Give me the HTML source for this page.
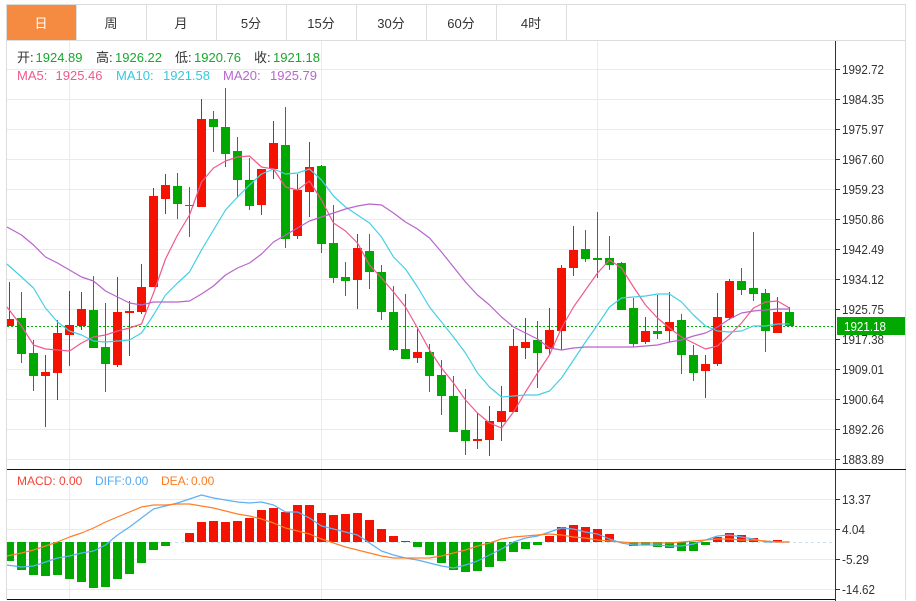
<!DOCTYPE html>
<html lang="zh">
<head>
<meta charset="utf-8">
<title>K线图</title>
<style>
html,body{margin:0;padding:0;background:#fff;width:916px;height:601px;overflow:hidden}
svg{display:block;position:absolute;left:0;top:0}
text{font-family:"Liberation Sans","Noto Sans CJK SC",sans-serif}
.tab{font-size:13px;fill:#333;text-anchor:middle}
.ax{font-size:13px;fill:#333}
.h{font-size:13px;fill:#333}
.v{font-size:13px;fill:#16a82c}
.ma{font-size:13px}
.m{font-size:12px}
</style>
</head>
<body>
<svg width="916" height="601" viewBox="0 0 916 601" xmlns="http://www.w3.org/2000/svg">
<!-- grid -->
<path shape-rendering="crispEdges" stroke="#e4ebf1" stroke-width="1" fill="none" d="M7 69.5H835M7 99.5H835M7 129.5H835M7 159.5H835M7 189.5H835M7 219.5H835M7 249.5H835M7 279.5H835M7 309.5H835M7 339.5H835M7 369.5H835M7 399.5H835M7 429.5H835M7 459.5H835M7 499.5H835M7 529.5H835M7 559.5H835M7 589.5H835M69.5 41V600M321.5 41V600M597.5 41V600"/>
<!-- frame -->
<path shape-rendering="crispEdges" stroke="#dcdcdc" fill="none" d="M6 4.5H906M6.5 4V600M905.5 4V600M6 40.5H906M76.5 5V40M146.5 5V40M216.5 5V40M286.5 5V40M356.5 5V40M426.5 5V40M496.5 5V40M566.5 5V40"/>
<rect x="7" y="5" width="69" height="35" fill="#f58a41"/>
<text class="tab" x="41" y="28" style="fill:#fff">日</text>
<text class="tab" x="111" y="28">周</text>
<text class="tab" x="181" y="28">月</text>
<text class="tab" x="251" y="28">5分</text>
<text class="tab" x="321" y="28">15分</text>
<text class="tab" x="391" y="28">30分</text>
<text class="tab" x="461" y="28">60分</text>
<text class="tab" x="531" y="28">4时</text>
<!-- zero and price lines -->
<path shape-rendering="crispEdges" stroke="#bfe4f3" stroke-dasharray="3 3" d="M7 542.5H835"/>
<path shape-rendering="crispEdges" stroke="#0aa80a" stroke-dasharray="2 2" d="M7 326.5H835"/>
<!-- red wicks -->
<path shape-rendering="crispEdges" stroke="#f01000" fill="none" d="M9.5 282V326M45.5 355V427M57.5 320V400M69.5 291V366M81.5 292V330M117.5 277V367M129.5 301V356M141.5 264V314M153.5 188V287M165.5 174V214M201.5 99V207M261.5 169V215M273.5 121V179M297.5 174V239M309.5 142V217M357.5 234V309M417.5 327V363M477.5 413V449M489.5 406V456M501.5 386V441M513.5 329V412M525.5 318V359M549.5 308V355M561.5 265V350M573.5 226V276M645.5 317V344M669.5 292V342M705.5 355V398M717.5 293V366M729.5 279V320M777.5 297V333"/>
<!-- green wicks -->
<path shape-rendering="crispEdges" stroke="#00a000" fill="none" d="M21.5 292V363M33.5 340V391M93.5 276V348M105.5 303V392M177.5 173V219M189.5 187V237M213.5 111V152M225.5 88V167M237.5 137V198M249.5 158V210M285.5 107V248M321.5 165V253M333.5 205V283M345.5 262V296M369.5 234V289M381.5 265V320M393.5 286V351M405.5 294V359M429.5 344V392M441.5 360V415M453.5 376V432M465.5 389V455M537.5 321V388M585.5 230V262M597.5 212V278M609.5 236V270M621.5 262V310M633.5 298V347M657.5 295V339M681.5 314V374M693.5 345V381M741.5 268V295M753.5 232V301M765.5 289V352M789.5 307V326"/>
<!-- red bodies -->
<path fill="#f51200" d="M7 319h7V326h-7zM41 372h9V376h-9zM53 333h9V373h-9zM65 325h9V335h-9zM77 309h9V326h-9zM113 312h9V365h-9zM125 311h9V313h-9zM137 287h9V312h-9zM149 196h9V287h-9zM161 185h9V199h-9zM197 119h9V207h-9zM257 169h9V205h-9zM269 143h9V169h-9zM293 190h9V236h-9zM305 167h9V192h-9zM353 248h9V280h-9zM413 352h9V358h-9zM473 439h9V441h-9zM485 421h9V440h-9zM497 411h9V422h-9zM509 346h9V412h-9zM521 342h9V348h-9zM545 330h9V349h-9zM557 268h9V331h-9zM569 250h9V268h-9zM641 331h9V342h-9zM665 322h9V331h-9zM701 364h9V371h-9zM713 317h9V364h-9zM725 281h9V318h-9zM773 312h9V333h-9z"/>
<!-- green bodies -->
<path fill="#00a800" d="M17 318h9V354h-9zM29 353h9V376h-9zM89 310h9V348h-9zM101 347h9V364h-9zM173 186h9V204h-9zM185 205h9V206h-9zM209 119h9V127h-9zM221 127h9V154h-9zM233 151h9V180h-9zM245 180h9V206h-9zM281 145h9V239h-9zM317 166h9V244h-9zM329 243h9V278h-9zM341 277h9V281h-9zM365 251h9V272h-9zM377 272h9V312h-9zM389 312h9V350h-9zM401 349h9V359h-9zM425 352h9V376h-9zM437 375h9V396h-9zM449 396h9V432h-9zM461 430h9V441h-9zM533 340h9V353h-9zM581 249h9V259h-9zM593 258h9V260h-9zM605 258h9V265h-9zM617 263h9V310h-9zM629 308h9V344h-9zM653 331h9V334h-9zM677 320h9V355h-9zM689 355h9V373h-9zM737 281h9V290h-9zM749 288h9V294h-9zM761 293h9V331h-9zM785 312h9V326h-9z"/>
<!-- MA lines -->
<polyline fill="none" stroke="#ef5a8c" stroke-width="1.2" stroke-linejoin="round" points="7,307 21.5,326 33.5,345 45.5,349 57.5,350 69.5,351 81.5,343 93.5,337 105.5,335 117.5,331 129.5,328 141.5,324 153.5,293 165.5,259 177.5,235 189.5,215 201.5,182 213.5,168 225.5,161 237.5,157 249.5,156 261.5,167 273.5,169 285.5,187 297.5,190 309.5,181 321.5,200 333.5,223 345.5,231 357.5,243 369.5,265 381.5,278 393.5,292 405.5,307 417.5,328 429.5,350 441.5,368 453.5,383 465.5,400 477.5,413 489.5,423 501.5,428 513.5,412 525.5,392 537.5,373 549.5,355 561.5,328 573.5,307 585.5,290 597.5,273 609.5,260 621.5,268 633.5,287 645.5,305 657.5,318 669.5,328 681.5,337 693.5,343 705.5,349 717.5,346 729.5,335 741.5,323 753.5,308 765.5,302 777.5,301 789.5,308"/>
<polyline fill="none" stroke="#45cfe3" stroke-width="1.2" stroke-linejoin="round" points="7,264 21.5,277 33.5,288 45.5,308 57.5,322 69.5,331 81.5,335 93.5,341 105.5,342 117.5,341 129.5,340 141.5,333 153.5,315 165.5,295 177.5,283 189.5,272 201.5,250 213.5,230 225.5,210 237.5,197 249.5,185 261.5,174 273.5,169 285.5,174 297.5,173 309.5,169 321.5,180 333.5,196 345.5,207 357.5,215 369.5,223 381.5,237 393.5,257 405.5,269 417.5,287 429.5,307 441.5,322 453.5,337 465.5,353 477.5,373 489.5,387 501.5,397 513.5,396 525.5,395 537.5,395 549.5,391 561.5,378 573.5,360 585.5,342 597.5,325 609.5,307 621.5,298 633.5,297 645.5,296 657.5,294 669.5,294 681.5,302 693.5,315 705.5,326 717.5,331 729.5,332 741.5,331 753.5,326 765.5,326 777.5,324 789.5,324"/>
<polyline fill="none" stroke="#b964cc" stroke-width="1.2" stroke-linejoin="round" points="7,227 21.5,235 33.5,245 45.5,257 57.5,263 69.5,270 81.5,277 93.5,281 105.5,291 117.5,297 129.5,303 141.5,305 153.5,302 165.5,302 177.5,302 189.5,301 201.5,294 213.5,286 225.5,275 237.5,268 249.5,263 261.5,254 273.5,242 285.5,235 297.5,228 309.5,221 321.5,217 333.5,213 345.5,209 357.5,206 369.5,204 381.5,205 393.5,213 405.5,222 417.5,229 429.5,238 441.5,252 453.5,267 465.5,282 477.5,295 489.5,305 501.5,317 513.5,327 525.5,333 537.5,339 549.5,348 561.5,350 573.5,348 585.5,347 597.5,347 609.5,347 621.5,347 633.5,347 645.5,346 657.5,345 669.5,342 681.5,340 693.5,336 705.5,333 717.5,327 729.5,319 741.5,313 753.5,311 765.5,310 777.5,309 789.5,309"/>
<!-- MACD bars -->
<path fill="#f51200" d="M185 533h9V542h-9zM197 522h9V542h-9zM209 521h9V542h-9zM221 522h9V542h-9zM233 521h9V542h-9zM245 518h9V542h-9zM257 510h9V542h-9zM269 508h9V542h-9zM281 512h9V542h-9zM293 505h9V542h-9zM305 505h9V542h-9zM317 513h9V542h-9zM329 515h9V542h-9zM341 514h9V542h-9zM353 513h9V542h-9zM365 520h9V542h-9zM377 529h9V542h-9zM389 536h9V542h-9zM401 541h9V542h-9zM545 536h9V542h-9zM557 527h9V542h-9zM569 525h9V542h-9zM581 527h9V542h-9zM593 529h9V542h-9zM605 534h9V542h-9zM713 537h9V542h-9zM725 533h9V542h-9zM737 535h9V542h-9zM749 538h9V542h-9zM773 540h9V542h-9z"/>
<path fill="#00a800" d="M7 542h7V561h-7zM17 542h9V570h-9zM29 542h9V575h-9zM41 542h9V576h-9zM53 542h9V575h-9zM65 542h9V579h-9zM77 542h9V582h-9zM89 542h9V588h-9zM101 542h9V587h-9zM113 542h9V579h-9zM125 542h9V574h-9zM137 542h9V563h-9zM149 542h9V550h-9zM161 542h9V546h-9zM413 542h9V547h-9zM425 542h9V555h-9zM437 542h9V563h-9zM449 542h9V570h-9zM461 542h9V572h-9zM473 542h9V571h-9zM485 542h9V567h-9zM497 542h9V561h-9zM509 542h9V552h-9zM521 542h9V549h-9zM533 542h9V545h-9zM629 542h9V546h-9zM641 542h9V545h-9zM653 542h9V547h-9zM665 542h9V548h-9zM677 542h9V551h-9zM689 542h9V551h-9zM701 542h9V545h-9z"/>
<polyline fill="none" stroke="#5fb0f2" stroke-width="1.2" stroke-linejoin="round" points="7,565 21.5,567 33.5,566 45.5,562 57.5,558 69.5,556 81.5,553 93.5,551 105.5,545 117.5,535 129.5,527 141.5,518 153.5,509 165.5,506 177.5,503 189.5,499 201.5,495 213.5,498 225.5,500 237.5,502 249.5,503 261.5,502 273.5,505 285.5,512 297.5,512 309.5,518 321.5,526 333.5,529 345.5,532 357.5,535 369.5,543 381.5,551 393.5,555 405.5,558 417.5,560 429.5,563 441.5,566 453.5,568 465.5,565 477.5,561 489.5,555 501.5,549 513.5,542 525.5,538 537.5,536 549.5,532 561.5,528 573.5,529 585.5,532 597.5,534 609.5,539 621.5,543 633.5,545 645.5,545 657.5,545 669.5,546 681.5,546 693.5,544 705.5,540 717.5,536 729.5,535 741.5,537 753.5,539 765.5,542 777.5,542 789.5,542"/>
<polyline fill="none" stroke="#ff7f2a" stroke-width="1.2" stroke-linejoin="round" points="7,556 21.5,553 33.5,550 45.5,546 57.5,542 69.5,537 81.5,533 93.5,528 105.5,522 117.5,517 129.5,512 141.5,507 153.5,505 165.5,505 177.5,504 189.5,504 201.5,506 213.5,508 225.5,511 237.5,514 249.5,516 261.5,519 273.5,523 285.5,528 297.5,531 309.5,534 321.5,539 333.5,543 345.5,547 357.5,550 369.5,553 381.5,556 393.5,558 405.5,558 417.5,558 429.5,558 441.5,556 453.5,553 465.5,550 477.5,546 489.5,543 501.5,539 513.5,537 525.5,536 537.5,535 549.5,534 561.5,535 573.5,537 585.5,538 597.5,540 609.5,541 621.5,542 633.5,543 645.5,543 657.5,543 669.5,543 681.5,542 693.5,541 705.5,540 717.5,539 729.5,539 741.5,540 753.5,540 765.5,541 777.5,542 789.5,542"/>
<!-- panel lines -->
<path shape-rendering="crispEdges" stroke="#111" fill="none" d="M7 469.5H906M7 599.5H835"/>
<path shape-rendering="crispEdges" stroke="#333" fill="none" d="M835.5 41V601M835 69.5h5M835 99.5h5M835 129.5h5M835 159.5h5M835 189.5h5M835 219.5h5M835 249.5h5M835 279.5h5M835 309.5h5M835 339.5h5M835 369.5h5M835 399.5h5M835 429.5h5M835 459.5h5M835 499.5h5M835 529.5h5M835 559.5h5M835 589.5h5"/>
<!-- axis labels -->
<text class="ax" x="842" y="74" textLength="42" lengthAdjust="spacingAndGlyphs">1992.72</text>
<text class="ax" x="842" y="104" textLength="42" lengthAdjust="spacingAndGlyphs">1984.35</text>
<text class="ax" x="842" y="134" textLength="42" lengthAdjust="spacingAndGlyphs">1975.97</text>
<text class="ax" x="842" y="164" textLength="42" lengthAdjust="spacingAndGlyphs">1967.60</text>
<text class="ax" x="842" y="194" textLength="42" lengthAdjust="spacingAndGlyphs">1959.23</text>
<text class="ax" x="842" y="224" textLength="42" lengthAdjust="spacingAndGlyphs">1950.86</text>
<text class="ax" x="842" y="254" textLength="42" lengthAdjust="spacingAndGlyphs">1942.49</text>
<text class="ax" x="842" y="284" textLength="42" lengthAdjust="spacingAndGlyphs">1934.12</text>
<text class="ax" x="842" y="314" textLength="42" lengthAdjust="spacingAndGlyphs">1925.75</text>
<text class="ax" x="842" y="344" textLength="42" lengthAdjust="spacingAndGlyphs">1917.38</text>
<text class="ax" x="842" y="374" textLength="42" lengthAdjust="spacingAndGlyphs">1909.01</text>
<text class="ax" x="842" y="404" textLength="42" lengthAdjust="spacingAndGlyphs">1900.64</text>
<text class="ax" x="842" y="434" textLength="42" lengthAdjust="spacingAndGlyphs">1892.26</text>
<text class="ax" x="842" y="464" textLength="42" lengthAdjust="spacingAndGlyphs">1883.89</text>
<text class="ax" x="842" y="504" textLength="29" lengthAdjust="spacingAndGlyphs">13.37</text>
<text class="ax" x="842" y="534" textLength="23" lengthAdjust="spacingAndGlyphs">4.04</text>
<text class="ax" x="842" y="564" textLength="27" lengthAdjust="spacingAndGlyphs">-5.29</text>
<text class="ax" x="842" y="594" textLength="33" lengthAdjust="spacingAndGlyphs">-14.62</text>
<!-- price tag -->
<rect x="837" y="317" width="68" height="18" fill="#00a800"/>
<text x="844" y="331" textLength="42" lengthAdjust="spacingAndGlyphs" style="font-size:13px;fill:#fff">1921.18</text>
<!-- headers -->
<text class="h" x="17" y="62">开:</text><text class="v" x="35.5" y="62">1924.89</text>
<text class="h" x="96" y="62">高:</text><text class="v" x="115" y="62">1926.22</text>
<text class="h" x="175" y="62">低:</text><text class="v" x="194" y="62">1920.76</text>
<text class="h" x="254" y="62">收:</text><text class="v" x="273" y="62">1921.18</text>
<g fill="#f0598d"><text class="ma" x="17" y="80">MA5:</text><text class="ma" x="55.5" y="80">1925.46</text></g>
<g fill="#37c8dc"><text class="ma" x="116" y="80">MA10:</text><text class="ma" x="163" y="80">1921.58</text></g>
<g fill="#b865cf"><text class="ma" x="223" y="80">MA20:</text><text class="ma" x="270" y="80">1925.79</text></g>
<g fill="#f44336"><text class="m" x="17" y="485">MACD:</text><text class="m" x="59" y="485">0.00</text></g>
<g fill="#55a8f0"><text class="m" x="95" y="485">DIFF:</text><text class="m" x="125" y="485">0.00</text></g>
<g fill="#ff7a1f"><text class="m" x="161" y="485">DEA:</text><text class="m" x="191" y="485">0.00</text></g>
</svg>
</body>
</html>
